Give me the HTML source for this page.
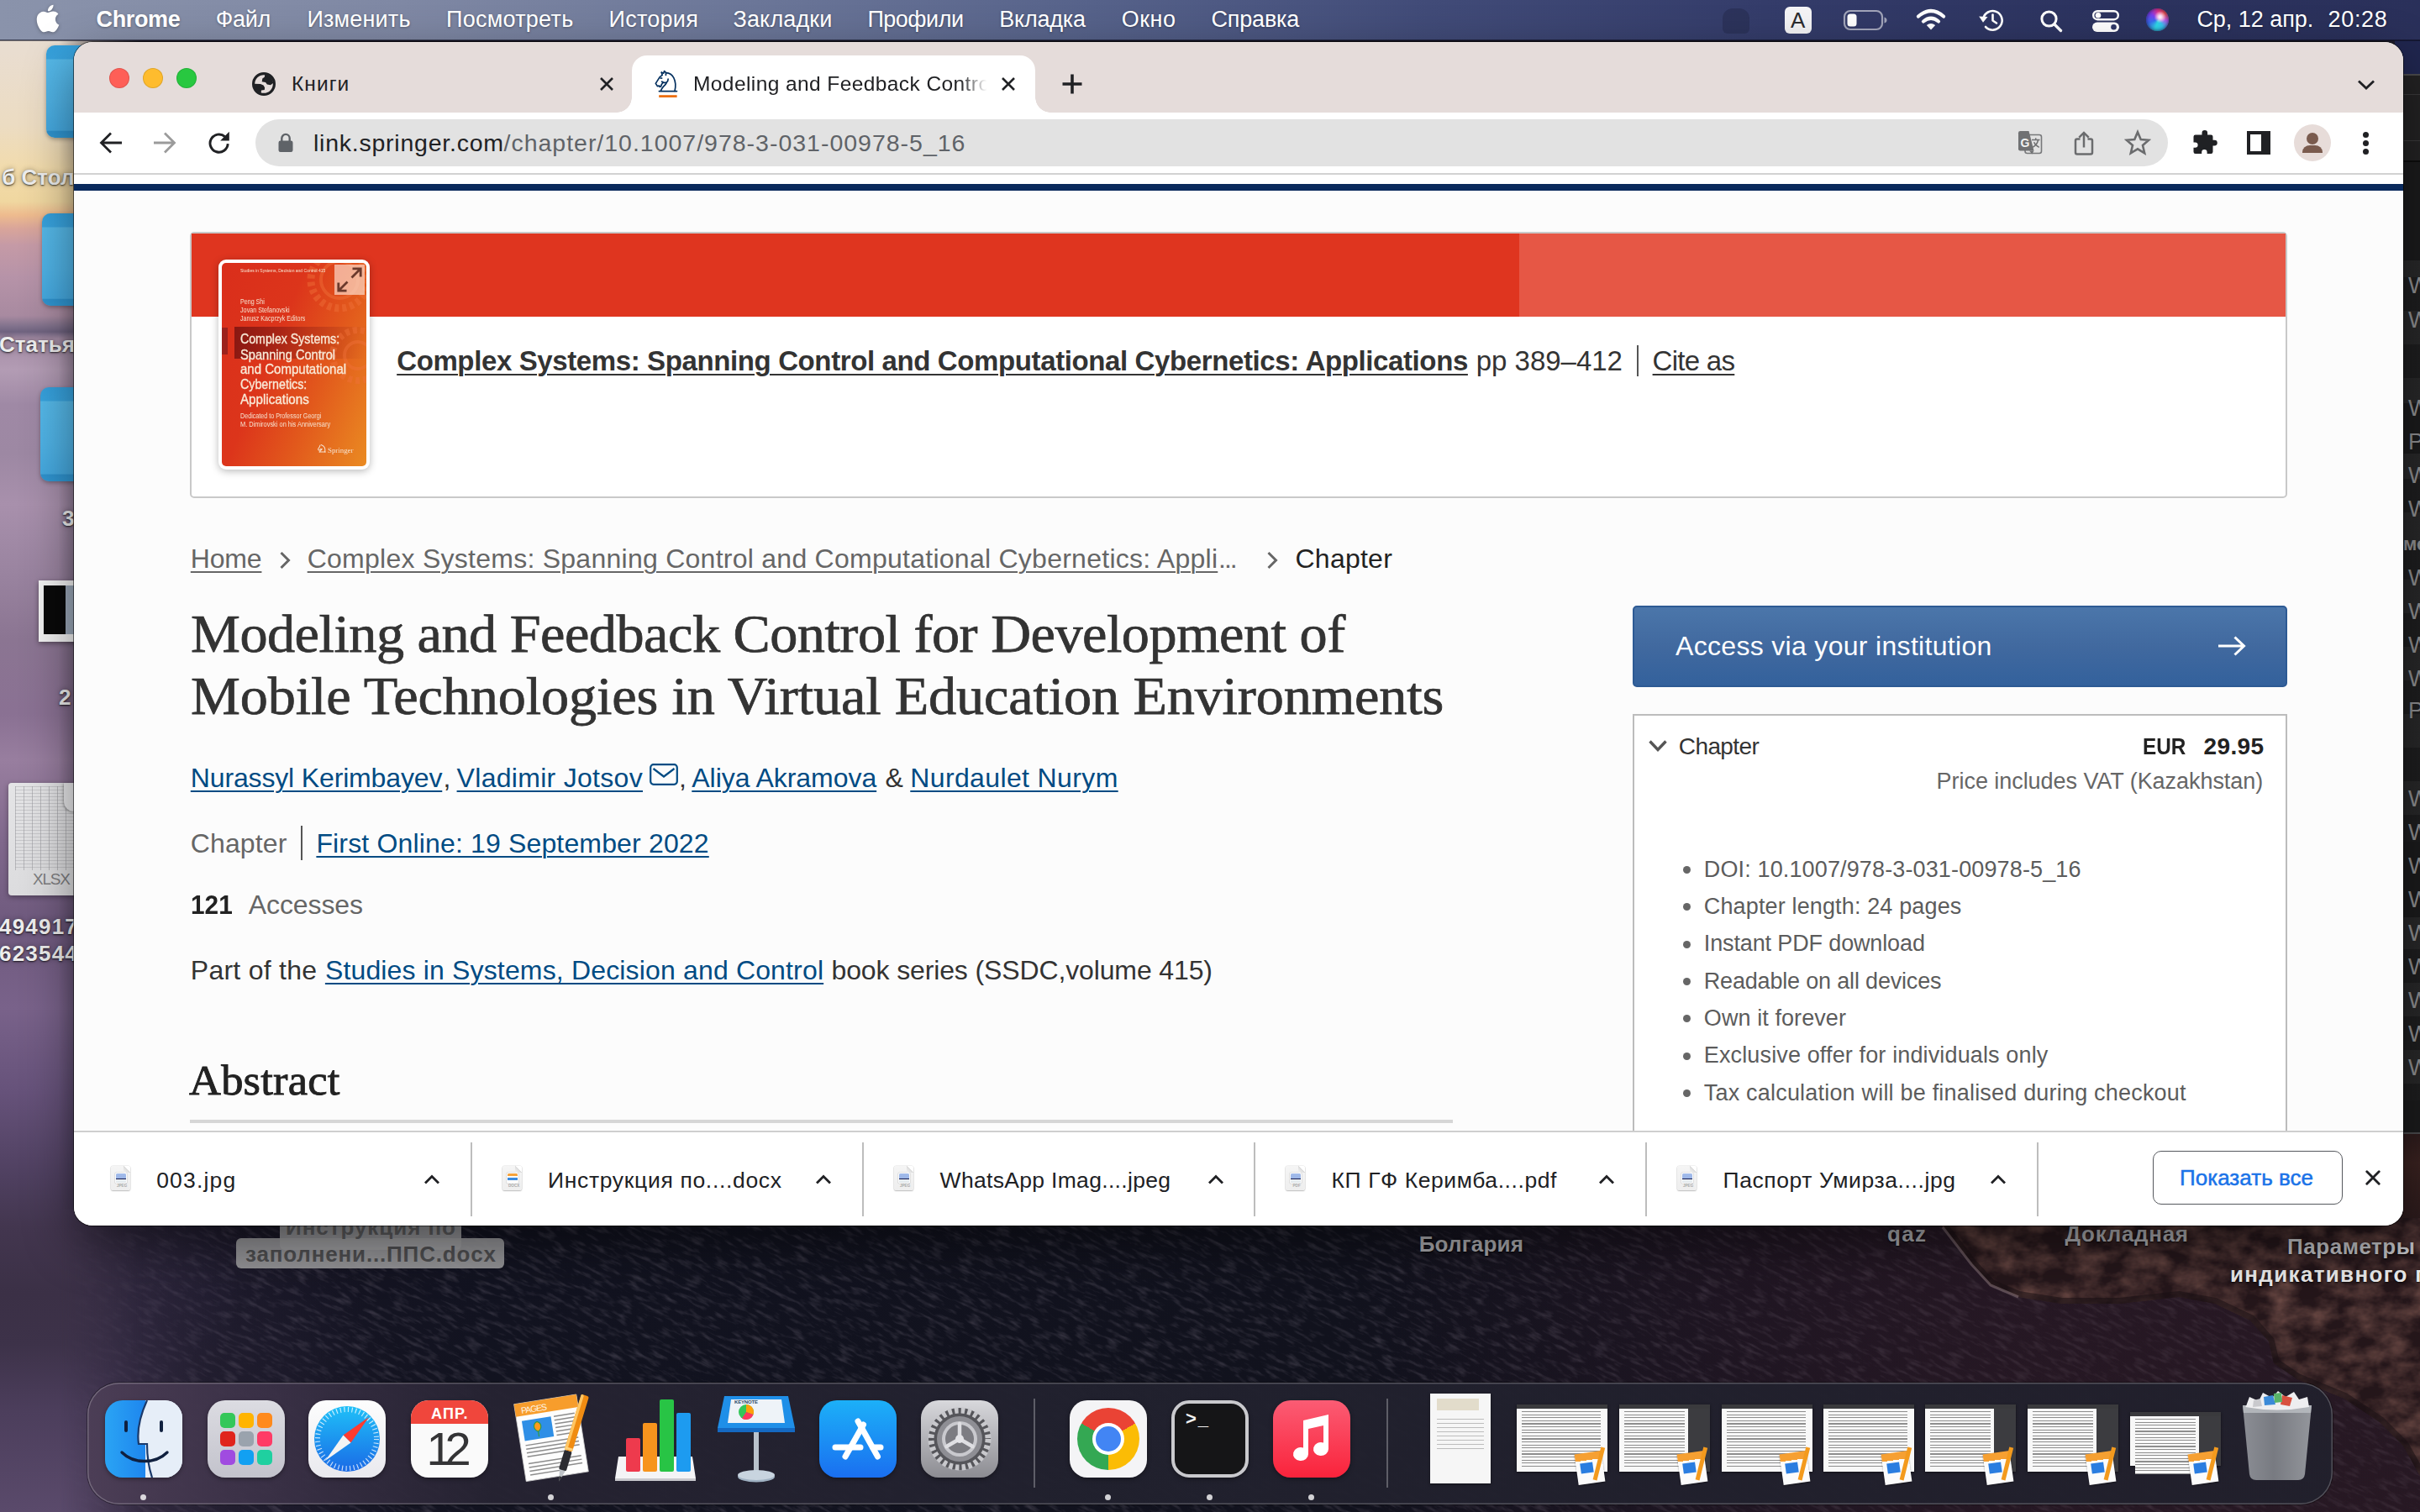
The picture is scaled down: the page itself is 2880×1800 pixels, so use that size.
<!DOCTYPE html>
<html lang="ru"><head><meta charset="utf-8"><title>Modeling and Feedback Control</title>
<style>
*{box-sizing:border-box;margin:0;padding:0}
html,body{width:2880px;height:1800px;overflow:hidden;background:#1e1c2a}
body{font-family:"Liberation Sans",sans-serif;-webkit-font-smoothing:antialiased}
#root{position:relative;width:2880px;height:1800px;overflow:hidden}
.abs,.t,#root svg.i{position:absolute}
.t{white-space:nowrap;display:block}
.u{text-decoration:underline;text-decoration-thickness:2px;text-underline-offset:4px}
/* wallpaper */
#wp{position:absolute;left:0;top:0;width:2880px;height:1800px;background:#1f1d2b}
/* menubar */
#menubar{position:absolute;left:0;top:0;width:2880px;height:48px;background:linear-gradient(90deg,#8a93ab 0,#7f88a4 480px,#6b7698 900px,#56628a 1300px,#414b78 1700px,#343c6a 2100px,#2c335f 2500px,#2a305a 2880px)}
.mb{color:#fff;text-shadow:0 1px 3px rgba(0,0,0,.35)}
/* window */
#win{position:absolute;left:88px;top:50px;width:2772px;height:1409px;border-radius:22px;background:#fcfcfc;overflow:hidden;box-shadow:0 0 0 1px rgba(0,0,0,.55),0 22px 60px rgba(0,0,0,.45)}
#wing{position:absolute;left:-88px;top:-50px;width:2880px;height:1800px}
#wing div,#wing svg{position:absolute}
#tabstrip{left:88px;top:50px;width:2772px;height:84px;background:#e5dcda}
#toolbar{left:88px;top:134px;width:2772px;height:73px;background:#fff}
#tbline{left:88px;top:206px;width:2772px;height:2px;background:#d2d2d2}
#pagetop{left:88px;top:208px;width:2772px;height:11px;background:#fff}
#navy{left:88px;top:219px;width:2772px;height:8px;background:#0a2a5c}
#omni{left:304px;top:142px;width:2276px;height:56px;border-radius:28px;background:#e2e2e2}
#tab2{left:752px;top:66px;width:480px;height:68px;background:#fff;border-radius:18px 18px 0 0}
#tab2:before,#tab2:after{content:"";position:absolute;bottom:0;width:18px;height:18px;background:radial-gradient(circle at 0 0,rgba(255,255,255,0) 17.5px,#fff 18px)}
#tab2:before{left:-18px}
#tab2:after{right:-18px;transform:scaleX(-1)}
/* downloads bar */
#dlbar{left:88px;top:1346px;width:2772px;height:113px;background:#fff;border-top:2px solid #cfcfcf}
.dlsep{top:1360px;width:2px;height:88px;background:#bdbdbd}
/* page */
#card{left:226px;top:276px;width:2496px;height:317px;border:2px solid #c9c9c9;border-radius:5px;background:#fff;overflow:hidden}
#red1{left:228px;top:278px;width:1580px;height:99px;background:#df351f}
#red2{left:1808px;top:278px;width:912px;height:99px;background:#e65745}
#cover{left:260px;top:309px;width:180px;height:250px;border-radius:9px;background:#fff;box-shadow:0 2px 10px rgba(0,0,0,.28)}
#coverimg{left:264px;top:313px;width:172px;height:242px;border-radius:5px;overflow:hidden;background:linear-gradient(112deg,#da2e1b 0,#dc351b 38%,#e25a1c 66%,#ea8b22 100%)}
#btn{left:1943px;top:721px;width:779px;height:97px;border-radius:5px;border:2px solid #2d5a94;background:linear-gradient(180deg,#4b76aa 0,#41699f 50%,#33619c 100%)}
#buybox{left:1943px;top:850px;width:779px;height:520px;border:2px solid #bcbcbc;background:#fff}
#absrule{left:226px;top:1333px;width:1503px;height:4px;background:#d6d6d6}
.vsep{width:2px;background:#555}
.fold{border-radius:10px;background:linear-gradient(180deg,#35a0dc 0,#38a3de 16px,#55b8e8 17px,#4fb2e5 60%,#45a9e0 92%,#2f93cf 93%,#3097d2 100%);box-shadow:0 2px 5px rgba(0,0,0,.3)}
.dl{color:#ececec;text-shadow:0 1px 2px rgba(0,0,0,.75),0 0 6px rgba(0,0,0,.35)}
.bul{left:2003px;width:9px;height:9px;border-radius:50%;background:#666}
.car{top:1397px}
.fic{top:1388px;width:23px;height:29px;border-radius:2.500px;background:linear-gradient(180deg,#f5f5f5,#eeeeee);box-shadow:0 0 0 .6px rgba(0,0,0,.10),0 1px 1.500px rgba(0,0,0,.22)}
.fic:before{content:"";position:absolute;left:6px;top:8.500px;width:11.500px;height:11.500px;border-radius:1.500px;background:linear-gradient(180deg,#a3bceb 0,#9ab4e6 52%,#10164f 53%,#1a1f4a 64%,#eef3f6 65%,#dfe6ea 100%);box-shadow:0 0 0 1.200px rgba(255,255,255,.9),0 0 0 1.800px rgba(0,0,0,.12)}
.fic:after{content:"";position:absolute;right:0;top:0;width:8px;height:8px;background:linear-gradient(225deg,#fff 0,#fff 48%,#dcdcdc 50%,#f6f6f6 100%);border-radius:0 2px 0 2px}
.fic.dx:before{background:linear-gradient(180deg,#f7a23a 0,#f7a23a 30%,#fbfbfb 31%,#fbfbfb 45%,#3b8be0 46%,#3b8be0 75%,#fbfbfb 76%)}
/* dock */
#dock{position:absolute;left:104px;top:1646px;width:2672px;height:145px;border-radius:38px;background:linear-gradient(90deg,rgba(76,62,86,.94) 0,rgba(60,50,72,.94) 200px,rgba(38,35,50,.95) 480px,rgba(33,33,46,.96) 1200px,rgba(33,32,44,.96) 100%);box-shadow:inset 0 0 0 1.500px rgba(255,255,255,.22),0 0 0 1px rgba(0,0,0,.35)}
#dockin .abs{position:absolute}
.di{position:absolute;top:1667px;width:92px;height:92px;border-radius:21px;overflow:hidden;box-shadow:0 2px 5px rgba(0,0,0,.35)}
.th{position:absolute;top:1672px;width:108px;height:80px;background:#f8f8f8;border-top:5px solid #3a3a3d;box-shadow:0 1px 3px rgba(0,0,0,.5)}
.th i{position:absolute;left:6px;top:3px;width:94px;height:66px;background:repeating-linear-gradient(180deg,#8e8e8e 0 1.200px,#f8f8f8 1.200px 3.600px)}
.th.dk:after{content:"";position:absolute;right:0;top:0;width:26px;height:100%;background:#3c3c40}
.th.dk i{width:72px}
.pb{position:absolute;top:1729px;width:32px;height:37px;background:linear-gradient(180deg,#f6a032 0 9px,#fbfbfb 9px 100%);transform:rotate(-8deg);box-shadow:0 1px 2px rgba(0,0,0,.4)}
.pb:before{content:"";position:absolute;left:5px;top:12px;width:15px;height:12px;background:#2a7de0}
.pb:after{content:"";position:absolute;left:25px;top:-5px;width:4.500px;height:40px;background:#f39a1d;transform:rotate(22deg)}
.dot{position:absolute;top:1779px;width:7px;height:7px;border-radius:50%;background:rgba(255,255,255,.8)}
.h1{-webkit-text-stroke:.75px #333}
.h2{-webkit-text-stroke:.85px #222}

</style></head>
<body>
<div id="root">
<div id="wp"></div>
<!-- sun glow -->
<div class="abs" style="left:-120px;top:150px;width:330px;height:170px;background:radial-gradient(ellipse at 30% 50%,rgba(248,212,140,.7),rgba(248,212,140,0) 70%)"></div>
<!-- bottom ocean -->
<svg class="i" style="left:0;top:1440px" width="2880" height="360" viewBox="0 1440 2880 360">
<defs>
<linearGradient id="oc" x1="0" y1="0" x2="1" y2="0"><stop offset="0" stop-color="#1c1828"/><stop offset=".2" stop-color="#121320"/><stop offset=".55" stop-color="#11121d"/><stop offset=".72" stop-color="#181320"/><stop offset="1" stop-color="#1b141f"/></linearGradient>
<radialGradient id="mist" cx="-40" cy="1780" r="760" gradientUnits="userSpaceOnUse"><stop offset="0" stop-color="#5c4b6a"/><stop offset=".2" stop-color="#4a3c58" stop-opacity=".75"/><stop offset=".42" stop-color="#3a3048" stop-opacity=".28"/><stop offset=".7" stop-color="#3a3050" stop-opacity="0"/></radialGradient>
<radialGradient id="mist2" cx="0" cy="1470" r="300" gradientUnits="userSpaceOnUse"><stop offset="0" stop-color="#46394f" stop-opacity=".9"/><stop offset="1" stop-color="#3a3050" stop-opacity="0"/></radialGradient>
<linearGradient id="cl" x1="0" y1="0" x2="1" y2="1"><stop offset="0" stop-color="#3c2424"/><stop offset=".5" stop-color="#432826"/><stop offset="1" stop-color="#2a1a1e"/></linearGradient>
<filter id="rip" x="0" y="0" width="100%" height="100%"><feTurbulence type="fractalNoise" baseFrequency="0.05 0.2" numOctaves="3" seed="7" result="n"/><feColorMatrix in="n" type="matrix" values="0 0 0 0 0.30  0 0 0 0 0.26  0 0 0 0 0.33  0 0 0 2.6 -1.25"/></filter>
</defs>
<rect x="0" y="1440" width="2880" height="360" fill="url(#oc)"/>
<g transform="rotate(27 1440 1620)"><rect x="-200" y="600" width="3300" height="2100" filter="url(#rip)" opacity=".24"/></g>
<rect x="0" y="1440" width="900" height="360" fill="url(#mist)"/>
<rect x="0" y="1440" width="500" height="360" fill="url(#mist2)"/>
<!-- reddish sheen near shore -->
<linearGradient id="sheen" x1="1650" y1="0" x2="2400" y2="0" gradientUnits="userSpaceOnUse"><stop offset="0" stop-color="#3a1f2a" stop-opacity="0"/><stop offset="1" stop-color="#3a1f2a" stop-opacity=".38"/></linearGradient>
<rect x="1650" y="1440" width="1230" height="360" fill="url(#sheen)"/>
<!-- cliffs -->
<clipPath id="clp"><path d="M2300 1440 L2312 1461 L2346 1505 L2369 1530 L2402 1544 L2453 1552 L2523 1552 L2593 1544 L2636 1552 L2678 1572 L2700 1597 L2706 1623 L2734 1642 L2790 1665 L2832 1693 L2860 1721 L2880 1757 L2880 1440Z"/></clipPath>
<filter id="rock" x="0" y="0" width="100%" height="100%"><feTurbulence type="fractalNoise" baseFrequency="0.03 0.045" numOctaves="4" seed="11" result="n"/><feColorMatrix in="n" type="matrix" values="0 0 0 0 0.47  0 0 0 0 0.22  0 0 0 0 0.17  0 0 0 1.7 -0.55"/></filter>
<g clip-path="url(#clp)"><rect x="2290" y="1440" width="600" height="330" fill="#24161a"/><rect x="2290" y="1440" width="600" height="330" filter="url(#rock)" opacity=".5"/><path d="M2312 1461 L2346 1505 L2369 1530 L2402 1544 L2453 1552 L2523 1552 L2593 1544 L2636 1552 L2678 1572 L2700 1597 L2706 1623 L2734 1642 L2790 1665 L2832 1693 L2860 1721 L2880 1757" fill="none" stroke="#1a1014" stroke-width="14" opacity=".55"/></g>
<path d="M2312 1461 L2346 1505 L2369 1530 L2402 1544" fill="none" stroke="#8a767c" stroke-width="3" opacity=".55"/>
</svg>
<!-- left sky strip -->
<div class="abs" style="left:0;top:0;width:170px;height:1800px;background:linear-gradient(180deg,#e8ded4 0,#e9ddd0 60px,#ecdcc2 150px,#f2dbaa 205px,#f0d7a0 240px,#eebb8e 256px,#d9a59a 272px,#c59aa6 292px,#b693a8 330px,#a88aa0 376px,#85758f 387px,#6f6380 395px,#a48ca5 403px,#b39cb4 440px,#9f89a5 482px,#9d88a3 540px,#a890ac 600px,#9a84a0 680px,#8b7592 760px,#8a7193 850px,#987e9f 905px,#80688c 1000px,#6f5a7e 1100px,#79628a 1200px,#66527a 1300px,#4f4060 1400px,#43364f 1460px,#3b3046 1540px,#3d3249 1600px,#4c3e5c 1680px,#5a4a6b 1800px);-webkit-mask-image:linear-gradient(90deg,#000 0,#000 70px,rgba(0,0,0,.55) 110px,rgba(0,0,0,0) 170px);mask-image:linear-gradient(90deg,#000 0,#000 70px,rgba(0,0,0,.55) 110px,rgba(0,0,0,0) 170px)"></div>
<!-- right background window (dark app) -->
<div class="abs" style="left:2850px;top:48px;width:30px;height:42px;background:#20264f"></div>
<div class="abs" style="left:2850px;top:1340px;width:30px;height:110px;background:linear-gradient(180deg,#2a1a1b,#3a2220 40%,#2c1b1c)"></div>
<div class="abs" style="left:2850px;top:88px;width:30px;height:1262px;background:#1c1c1d;border-top:2px solid #4a4a4c;border-bottom:2px solid #4a4a4c"></div>
</file_text>

<!-- desktop folders (left, mostly hidden behind window) -->
<div class="abs fold" style="left:55px;top:54px;width:120px;height:110px"></div>
<div class="abs fold" style="left:50px;top:254px;width:120px;height:110px"></div>
<div class="abs fold" style="left:48px;top:461px;width:120px;height:112px"></div>
<!-- screenshot thumbnail -->
<div class="abs" style="left:46px;top:691px;width:120px;height:73px;background:#f2f2f2;box-shadow:0 2px 6px rgba(0,0,0,.4)"><div class="abs" style="left:6px;top:6px;width:26px;height:58px;background:#0a0a0a"></div><div class="abs" style="left:32px;top:6px;width:60px;height:58px;background:#9aa7b8"></div></div>
<!-- xlsx file -->
<div class="abs" style="left:10px;top:932px;width:110px;height:134px;border-radius:4px;background:linear-gradient(180deg,#e4e4e6,#dcdcde);box-shadow:0 2px 6px rgba(0,0,0,.35)">
<div class="abs" style="left:8px;top:4px;width:100px;height:100px;background:repeating-linear-gradient(90deg,rgba(150,150,155,.55) 0 1px,rgba(0,0,0,0) 1px 10px),repeating-linear-gradient(180deg,rgba(150,150,155,.35) 0 1px,rgba(0,0,0,0) 1px 4px)"></div>
<div class="abs" style="left:66px;top:0;width:44px;height:34px;background:#e9e9eb;border-radius:0 0 0 12px;box-shadow:-1px 1px 3px rgba(0,0,0,.3)"></div>
</div>
<!-- rows of the dark window at right edge -->
<div class="abs" style="left:2860px;top:90px;width:20px;height:1258px;background:repeating-linear-gradient(180deg,#1e1e1f 0 40px,#29292a 40px 80px);opacity:.9"></div>
<div class="abs" style="left:2860px;top:90px;width:20px;height:220px;background:#1b1b1c"></div>
<div class="abs" style="left:2860px;top:480px;width:20px;height:60px;background:#1b1b1c"></div>
<div class="abs" style="left:2860px;top:1002px;width:20px;height:90px;background:#1b1b1c"></div>
<div class="abs" style="left:2860px;top:1310px;width:20px;height:38px;background:#1b1b1c"></div>
<div class="abs" style="left:2860px;top:112px;width:20px;height:1px;background:#3a3a3b"></div><div class="abs" style="left:2860px;top:167px;width:20px;height:1px;background:#3a3a3b"></div><div class="abs" style="left:2860px;top:191px;width:20px;height:2px;background:#0c0c0c"></div><div class="abs" style="left:2860px;top:90px;width:20px;height:101px;background:rgba(60,55,56,.25)"></div>
<!-- highlighted desktop label box -->
<div class="abs" style="left:333px;top:1452px;width:216px;height:36px;background:rgba(156,156,158,.9);border-radius:6px"></div>
<div class="abs" style="left:281px;top:1474px;width:319px;height:36px;background:rgba(156,156,158,.92);border-radius:6px"></div>
</file_text>

<div id="desktexts">
<span class="t dl" style="left:2.3px;top:198.3px;font-size:26px;line-height:26px;color:#ededed;font-weight:700;">б Стол</span>
<span class="t dl" style="left:-1.0px;top:397.4px;font-size:26px;line-height:26px;color:#ededed;font-weight:700;">Статья</span>
<span class="t dl" style="left:74.0px;top:604.4px;font-size:26px;line-height:26px;color:#ededed;font-weight:700;">3</span>
<span class="t dl" style="left:70.0px;top:817.4px;font-size:26px;line-height:26px;color:#ededed;font-weight:700;">2</span>
<span class="t dl" style="left:-1.0px;top:1089.8px;font-size:26px;line-height:26px;color:#ededed;font-weight:700;letter-spacing:1.2px;">4949175</span>
<span class="t dl" style="left:-1.0px;top:1122.4px;font-size:26px;line-height:26px;color:#ededed;font-weight:700;letter-spacing:1.2px;">623544</span>
<span class="t" style="left:39.0px;top:1036.9px;font-size:19px;line-height:19px;color:#7d7d80;letter-spacing:-1.195px;">XLSX</span>
<span class="t" style="left:340.0px;top:1448.0px;font-size:26px;line-height:26px;color:#5a5a5c;font-weight:700;letter-spacing:0.955px;">Инструкция по</span>
<span class="t" style="left:292.0px;top:1480.0px;font-size:26px;line-height:26px;color:#4e4e50;font-weight:700;letter-spacing:0.838px;">заполнени...ППС.docx</span>
<span class="t dl" style="left:1688.7px;top:1468.0px;font-size:26px;line-height:26px;color:#a9a9ad;font-weight:700;letter-spacing:0.219px;">Болгария</span>
<span class="t dl" style="left:2246.0px;top:1456.0px;font-size:26px;line-height:26px;color:#a9a9ad;font-weight:700;letter-spacing:1.329px;">qaz</span>
<span class="t dl" style="left:2457.5px;top:1456.0px;font-size:26px;line-height:26px;color:#a9a9ad;font-weight:700;letter-spacing:0.704px;">Докладная</span>
<span class="t dl" style="left:2722.0px;top:1471.0px;font-size:26px;line-height:26px;color:#bdbdc0;font-weight:700;letter-spacing:0.543px;">Параметры</span>
<span class="t dl" style="left:2654.0px;top:1504.0px;font-size:26px;line-height:26px;color:#e9e9e9;font-weight:700;letter-spacing:1.341px;">индикативного п</span>
<span class="t" style="left:2866.0px;top:327.1px;font-size:27px;line-height:27px;color:#8f8f91;">W</span>
<span class="t" style="left:2866.0px;top:368.1px;font-size:27px;line-height:27px;color:#8f8f91;">W</span>
<span class="t" style="left:2866.0px;top:473.1px;font-size:27px;line-height:27px;color:#8f8f91;">W</span>
<span class="t" style="left:2866.0px;top:553.1px;font-size:27px;line-height:27px;color:#8f8f91;">W</span>
<span class="t" style="left:2866.0px;top:593.1px;font-size:27px;line-height:27px;color:#8f8f91;">W</span>
<span class="t" style="left:2866.0px;top:675.1px;font-size:27px;line-height:27px;color:#8f8f91;">W</span>
<span class="t" style="left:2866.0px;top:715.1px;font-size:27px;line-height:27px;color:#8f8f91;">W</span>
<span class="t" style="left:2866.0px;top:755.1px;font-size:27px;line-height:27px;color:#8f8f91;">W</span>
<span class="t" style="left:2866.0px;top:795.1px;font-size:27px;line-height:27px;color:#8f8f91;">W</span>
<span class="t" style="left:2866.0px;top:938.1px;font-size:27px;line-height:27px;color:#8f8f91;">W</span>
<span class="t" style="left:2866.0px;top:978.1px;font-size:27px;line-height:27px;color:#8f8f91;">W</span>
<span class="t" style="left:2866.0px;top:1018.1px;font-size:27px;line-height:27px;color:#8f8f91;">W</span>
<span class="t" style="left:2866.0px;top:1058.1px;font-size:27px;line-height:27px;color:#8f8f91;">W</span>
<span class="t" style="left:2866.0px;top:1098.1px;font-size:27px;line-height:27px;color:#8f8f91;">W</span>
<span class="t" style="left:2866.0px;top:1138.1px;font-size:27px;line-height:27px;color:#8f8f91;">W</span>
<span class="t" style="left:2866.0px;top:1178.1px;font-size:27px;line-height:27px;color:#8f8f91;">W</span>
<span class="t" style="left:2866.0px;top:1218.1px;font-size:27px;line-height:27px;color:#8f8f91;">W</span>
<span class="t" style="left:2866.0px;top:1258.1px;font-size:27px;line-height:27px;color:#8f8f91;">W</span>
<span class="t" style="left:2866.0px;top:513.1px;font-size:27px;line-height:27px;color:#8f8f91;">P</span>
<span class="t" style="left:2866.0px;top:833.1px;font-size:27px;line-height:27px;color:#8f8f91;">P</span>
<span class="t" style="left:2860.0px;top:637.4px;font-size:22px;line-height:22px;color:#8f8f91;font-weight:700;">мс</span>
</div>
<div id="menubar"></div>
<div class="abs" style="left:0;top:47px;width:2880px;height:2px;background:rgba(10,10,25,.55)"></div>
<!-- apple logo -->
<svg class="i" style="left:42px;top:5px;filter:drop-shadow(0 1px 2px rgba(0,0,0,.3))" width="30" height="34" viewBox="1 -0.5 22 25"><path fill="#fff" d="M12.152 6.896c-.948 0-2.415-1.078-3.96-1.04-2.04.027-3.91 1.183-4.961 3.014-2.117 3.675-.546 9.103 1.519 12.09 1.013 1.454 2.208 3.09 3.792 3.039 1.52-.065 2.09-.987 3.935-.987 1.831 0 2.35.987 3.96.948 1.637-.026 2.676-1.48 3.676-2.948 1.156-1.688 1.636-3.325 1.662-3.415-.039-.013-3.182-1.221-3.22-4.857-.026-3.04 2.48-4.494 2.597-4.559-1.429-2.09-3.623-2.324-4.39-2.376-2-.156-3.675 1.09-4.61 1.09zM15.53 3.83c.843-1.012 1.4-2.427 1.245-3.83-1.207.052-2.662.805-3.532 1.818-.78.896-1.454 2.338-1.273 3.714 1.338.104 2.715-.688 3.559-1.701"/></svg>
<!-- faint hidden status icon -->
<div class="abs" style="left:2050px;top:10px;width:32px;height:30px;border-radius:12px 12px 6px 6px;background:rgba(20,24,50,.28)"></div>
<!-- input source A -->
<div class="abs" style="left:2124px;top:8px;width:32px;height:32px;border-radius:6px;background:#f4f4f6"></div>
<!-- battery -->
<svg class="i" style="left:2192px;top:10px" width="56" height="28" viewBox="0 0 56 28"><rect x="3" y="3" width="45" height="22" rx="7" fill="none" stroke="#fff" stroke-opacity=".55" stroke-width="2.2"/><rect x="6.5" y="6.500" width="11" height="15" rx="3.500" fill="#fff"/><path d="M50.500 10.500 q3 1 3 3.500 q0 2.500 -3 3.500z" fill="#fff" fill-opacity=".55"/></svg>
<!-- wifi -->
<svg class="i" style="left:2280px;top:10px" width="36" height="27" viewBox="0 0 36 27"><g fill="none" stroke="#fff" stroke-linecap="round"><path d="M3 9.500 Q18 -3.500 33 9.500" stroke-width="4.200"/><path d="M9 15.500 Q18 8 27 15.500" stroke-width="4.200"/></g><path d="M18 25.500 L12.800 20 Q18 15.800 23.200 20Z" fill="#fff"/></svg>
<!-- time machine -->
<svg class="i" style="left:2354px;top:9px" width="32" height="30" viewBox="0 0 32 30"><g fill="none" stroke="#fff" stroke-width="2.600" stroke-linecap="round" stroke-linejoin="round"><path d="M6.200 13.500 A11.300 11.300 0 1 1 9 23"/><path d="M17.500 8.500 V15.500 L22 18.500"/></g><path d="M1.200 10.500 L11.500 11 L6 17.800Z" fill="#fff"/></svg>
<!-- spotlight -->
<svg class="i" style="left:2427px;top:11px" width="28" height="28" viewBox="0 0 28 28"><circle cx="11.500" cy="11.500" r="8.600" fill="none" stroke="#fff" stroke-width="3"/><path d="M18 18 L25.500 25.500" stroke="#fff" stroke-width="3.400" stroke-linecap="round"/></svg>
<!-- control center -->
<svg class="i" style="left:2490px;top:12px" width="32" height="26" viewBox="0 0 32 26"><rect x="1.200" y="1.200" width="29.600" height="10" rx="5" fill="none" stroke="#fff" stroke-width="2.400"/><circle cx="7" cy="6.200" r="3.300" fill="#fff"/><rect x="0" y="14.500" width="32" height="11.500" rx="5.750" fill="#fff"/><circle cx="25.500" cy="20.250" r="3.300" fill="#2f3868"/></svg>
<!-- siri -->
<div class="abs" style="left:2554px;top:10px;width:27px;height:27px;border-radius:50%;background:radial-gradient(circle at 62% 38%,#fff 0,#f6d8f4 9%,rgba(255,255,255,0) 30%),conic-gradient(from 200deg at 55% 48%,#2fd9e6,#3a6cf0,#7b3ff2,#e8368f,#ff5a4a,#b85cf0,#35c8f0,#2fd9e6);box-shadow:inset 0 0 5px rgba(20,10,60,.8)"></div>
</file_text>

<div id="win"><div id="wing">
<div id="tabstrip"></div>
<!-- traffic lights -->
<div style="left:130px;top:81px;width:24px;height:24px;border-radius:50%;background:#fe5f57;box-shadow:inset 0 0 0 1px rgba(0,0,0,.12)"></div>
<div style="left:170px;top:81px;width:24px;height:24px;border-radius:50%;background:#febc2e;box-shadow:inset 0 0 0 1px rgba(0,0,0,.12)"></div>
<div style="left:210px;top:81px;width:24px;height:24px;border-radius:50%;background:#28c840;box-shadow:inset 0 0 0 1px rgba(0,0,0,.12)"></div>
<!-- tab1 globe favicon -->
<svg style="left:300px;top:86px" width="28" height="28" viewBox="0 0 28 28"><circle cx="14" cy="14" r="12.400" fill="#e5dcda" stroke="#202124" stroke-width="3.200"/><path fill="#202124" d="M15.400 2.500 L14.800 5.700 L12.300 7.600 L11.700 11.300 L16 11.900 L17.900 14.400 L22 15.200 L25.300 12.800 A12 12 0 0 0 15.400 2.500Z M2.200 13.800 L10 13.900 L13.500 15.500 L15.100 18.200 L14.800 21 L11 21.600 L10.600 25 A12 12 0 0 1 2.200 13.800Z"/></svg>
<!-- tab1 close -->
<svg style="left:713px;top:91px" width="18" height="18" viewBox="0 0 18 18"><path d="M2 2 L16 16 M16 2 L2 16" stroke="#202124" stroke-width="2.600" fill="none"/></svg>
<!-- active tab -->
<div id="tab2"></div>
<!-- springer favicon -->
<svg style="left:779px;top:83px" width="28" height="34" viewBox="0 0 28 34"><g fill="none" stroke="#04305f" stroke-width="1.700" stroke-linecap="round" stroke-linejoin="round"><path d="M5.400 25.600 H26.500"/><path d="M8.300 3.200 L9.200 6.400 L6.200 8.600 L1.300 16.400 L3.400 19.600 L5.600 19 L6 20.300 L7.500 20 C8 18 8.600 16.600 9.900 15.400 L14.100 15.400 C15.400 14.400 16.100 12.800 16.100 11.200"/><path d="M8.300 3.200 L10.600 4.200 L11.600 1.600 L13.600 3.600 L13.400 6.400"/><path d="M13.600 3.600 C17 3.800 20.700 5.600 22.800 9.600 C24.600 13.200 25.600 19 24 25.400"/><path d="M14.100 15.600 C13.200 17.800 11.600 19 10.300 20.400 C8.800 22 7.800 23.400 7.400 25.200"/><path d="M7.200 10.200 L8.600 10"/><path d="M8.600 14.200 L10 14.600"/></g><rect x="5.200" y="30.200" width="21.400" height="2.800" fill="#ec6f12"/></svg>
<!-- tab2 close -->
<svg style="left:1191px;top:91px" width="18" height="18" viewBox="0 0 18 18"><path d="M2 2 L16 16 M16 2 L2 16" stroke="#202124" stroke-width="2.600" fill="none"/></svg>
<!-- new tab plus -->
<svg style="left:1264px;top:88px" width="24" height="24" viewBox="0 0 24 24"><path d="M12 0.500 V23.500 M0.500 12 H23.500" stroke="#202124" stroke-width="3.600" fill="none"/></svg>
<!-- tab search chevron -->
<svg style="left:2805px;top:94px" width="22" height="14" viewBox="0 0 22 14"><path d="M2 2.500 L11 11 L20 2.500" stroke="#202124" stroke-width="2.800" fill="none"/></svg>

<div id="toolbar"></div>
<div id="tbline"></div>
<div id="pagetop"></div>
<div id="navy"></div>
<div id="omni"></div>
<!-- back -->
<svg style="left:117px;top:155px" width="30" height="30" viewBox="0 0 30 30"><path d="M28 15 H4 M15 3.500 L3.500 15 L15 26.500" stroke="#202124" stroke-width="2.800" fill="none" stroke-linejoin="miter"/></svg>
<!-- forward -->
<svg style="left:181px;top:155px" width="30" height="30" viewBox="0 0 30 30"><path d="M2 15 H26 M15 3.500 L26.500 15 L15 26.500" stroke="#9b9b9b" stroke-width="2.800" fill="none"/></svg>
<!-- reload -->
<svg style="left:245px;top:154px" width="32" height="32" viewBox="0 0 32 32"><path d="M26.200 17.200 A10.600 10.600 0 1 1 22.600 8.600" stroke="#202124" stroke-width="2.900" fill="none"/><path d="M17.200 13.400 H27.800 V2.800Z" fill="#202124"/></svg>
<!-- lock -->
<svg style="left:331px;top:158px" width="18" height="24" viewBox="0 0 18 24"><rect x="0.500" y="9.500" width="17" height="13.500" rx="2.200" fill="#5f6368"/><path d="M4.300 10 V6.600 A4.700 4.700 0 0 1 13.700 6.600 V10" fill="none" stroke="#5f6368" stroke-width="2.400"/></svg>
<!-- translate -->
<svg style="left:2401px;top:155px" width="30" height="30" viewBox="0 0 30 30"><rect x="9" y="5.500" width="19.500" height="22" rx="2.500" fill="#e2e2e2" stroke="#77787a" stroke-width="1.600"/><path d="M1 3.200 Q1 1 3.200 1 H13.500 L19.500 24.500 H3.200 Q1 24.500 1 22.300Z" fill="#707173"/><path d="M14 24.500 L19.500 24.500 L17.400 28.500Z" fill="#707173"/><path d="M17 11.500 H26.500 M21.700 9.300 V11.500 M24.600 11.500 C23.800 15.500 21.400 18.600 18 20.400 M19.600 14.200 C20.800 17 22.800 19 25.800 20.400" fill="none" stroke="#707173" stroke-width="1.500"/></svg>
<!-- share -->
<svg style="left:2467px;top:155px" width="26" height="31" viewBox="0 0 26 31"><path d="M8.500 10.500 H5 Q3 10.500 3 12.500 V26.500 Q3 28.500 5 28.500 H21 Q23 28.500 23 26.500 V12.500 Q23 10.500 21 10.500 H17.500" fill="none" stroke="#6b6c6e" stroke-width="2.500"/><path d="M13 20.500 V3.500 M7.300 8.600 L13 2.900 L18.700 8.600" fill="none" stroke="#6b6c6e" stroke-width="2.500"/></svg>
<!-- star -->
<svg style="left:2528px;top:154px" width="32" height="31" viewBox="0 0 32 31"><path d="M16 3.200 L19.700 12 L29.200 12.800 L22 19 L24.200 28.300 L16 23.300 L7.800 28.300 L10 19 L2.800 12.800 L12.300 12Z" fill="none" stroke="#6b6c6e" stroke-width="2.600" stroke-linejoin="miter"/></svg>
<!-- extensions puzzle -->
<svg style="left:2609px;top:154px" width="31" height="30" viewBox="0 0 31 30"><path fill="#202124" d="M11.500 4.300 a3.300 3.300 0 0 1 6.600 0 V6.500 H22.300 Q24.500 6.500 24.500 8.700 V12.700 H26.400 a3.400 3.400 0 0 1 0 6.800 H24.500 V26.800 Q24.500 29 22.300 29 H17.600 V27.200 a3.200 3.200 0 0 0 -6.400 0 V29 H3.700 Q1.500 29 1.500 26.800 V21.800 H3.400 a3.200 3.200 0 0 0 0 -6.400 H1.500 V8.700 Q1.500 6.500 3.700 6.500 H11.500Z"/></svg>
<!-- side panel -->
<div style="left:2674px;top:156px;width:28px;height:28px;border:4px solid #202124;border-right-width:11px;background:#fff"></div>
<!-- avatar -->
<div style="left:2730px;top:148px;width:44px;height:44px;border-radius:50%;background:#e7dcd9;overflow:hidden"><div style="left:15px;top:10px;width:14px;height:14px;border-radius:50%;background:#7a5b4e"></div><div style="left:10px;top:25px;width:24px;height:9px;border-radius:9px 9px 0 0/8px 8px 0 0;background:#7a5b4e"></div></div>
<!-- kebab -->
<div style="left:2812px;top:157px;width:7px;height:7px;border-radius:50%;background:#202124"></div>
<div style="left:2812px;top:167px;width:7px;height:7px;border-radius:50%;background:#202124"></div>
<div style="left:2812px;top:177px;width:7px;height:7px;border-radius:50%;background:#202124"></div>

<!-- PAGE -->
<div id="card"></div>
<div id="red1"></div><div id="red2"></div>
<div id="cover"></div>
<div id="coverimg">
<div style="left:15px;top:76px;width:157px;height:38px;background:linear-gradient(100deg,rgba(105,14,14,.72),rgba(140,30,20,.38) 55%,rgba(150,40,20,0) 100%)"></div>
<div style="left:0;top:77px;width:7px;height:32px;background:#9c221c"></div>
<svg style="left:70px;top:-10px" width="110" height="200" viewBox="0 0 110 200"><g fill="none" stroke="#f0703a" stroke-opacity=".45"><circle cx="70" cy="30" r="34" stroke-width="9" stroke-dasharray="5 4"/><circle cx="70" cy="30" r="22" stroke-width="4"/><circle cx="92" cy="120" r="30" stroke-width="8" stroke-dasharray="5 4"/><circle cx="92" cy="120" r="16" stroke-width="4"/></g></svg>
<svg style="left:114px;top:216px" width="10" height="12" viewBox="0 0 28 34"><g fill="none" stroke="#f6e2cf" stroke-width="3" stroke-linecap="round" stroke-linejoin="round"><path d="M5.400 25.600 H26.500"/><path d="M8.300 3.200 L6.200 8.600 L1.300 16.400 L3.400 19.600 L7.500 20 C8 18 8.600 16.600 9.900 15.400 L14.100 15.400"/><path d="M11.600 1.600 C17 3.800 20.700 5.600 22.800 9.600 C24.600 13.200 25.600 19 24 25.400"/><path d="M14.100 15.600 C13.200 17.800 8.800 22 7.400 25.200"/></g></svg>
<div style="left:134px;top:2px;width:36px;height:36px;background:rgba(255,235,225,.62)"></div>
<svg style="left:134px;top:2px" width="36" height="36" viewBox="0 0 36 36"><g fill="none" stroke="#6b3a2c" stroke-width="2.800"><path d="M20.500 15.500 L31 5 M21.500 4.800 H31.200 V14.500"/><path d="M15.500 20.500 L5 31 M4.800 21.500 V31.200 H14.500"/></g></svg>
</div>
<div class="vsep" style="left:1948px;top:411px;height:37px"></div>
<!-- breadcrumb chevrons -->
<svg style="left:331px;top:655px" width="16" height="24" viewBox="0 0 16 24"><path d="M3.500 3 L12.500 12 L3.500 21" stroke="#666" stroke-width="3" fill="none"/></svg>
<svg style="left:1506px;top:655px" width="16" height="24" viewBox="0 0 16 24"><path d="M3.500 3 L12.500 12 L3.500 21" stroke="#666" stroke-width="3" fill="none"/></svg>
<!-- mail icon -->
<svg style="left:773px;top:909px" width="34" height="26" viewBox="0 0 34 26"><rect x="1.200" y="1.200" width="31.600" height="23.600" rx="3.500" fill="none" stroke="#004b83" stroke-width="2.200"/><path d="M4.500 6 L17 15.500 L29.500 6" fill="none" stroke="#004b83" stroke-width="2.200"/></svg>
<div class="vsep" style="left:358px;top:983px;height:41px"></div>
<div id="absrule"></div>
<!-- sidebar -->
<div id="btn"></div>
<svg style="left:2638px;top:755px" width="36" height="28" viewBox="0 0 36 28"><path d="M2 14 H32 M21.500 3.500 L32.500 14 L21.500 24.500" stroke="#fff" stroke-width="3" fill="none"/></svg>
<div id="buybox"></div>
<svg style="left:1961px;top:879px" width="24" height="18" viewBox="0 0 24 18"><path d="M2.500 3.500 L12 13.500 L21.500 3.500" stroke="#555" stroke-width="3.400" fill="none"/></svg>
<div class="bul" style="top:1031px"></div><div class="bul" style="top:1075px"></div><div class="bul" style="top:1120px"></div><div class="bul" style="top:1164px"></div><div class="bul" style="top:1208px"></div><div class="bul" style="top:1253px"></div><div class="bul" style="top:1297px"></div>

<!-- downloads bar -->
<div id="dlbar"></div>
<div class="dlsep" style="left:560px"></div><div class="dlsep" style="left:1026px"></div><div class="dlsep" style="left:1492px"></div><div class="dlsep" style="left:1958px"></div><div class="dlsep" style="left:2424px"></div>
<div class="fic" style="left:132px"></div><div class="fic dx" style="left:598px"></div><div class="fic" style="left:1064px"></div><div class="fic" style="left:1530px"></div><div class="fic" style="left:1996px"></div>
<svg class="car" style="left:504px"  width="20" height="14" viewBox="0 0 20 14"><path d="M2 11.500 L10 3.500 L18 11.500" stroke="#202124" stroke-width="2.800" fill="none"/></svg>
<svg class="car" style="left:970px"  width="20" height="14" viewBox="0 0 20 14"><path d="M2 11.500 L10 3.500 L18 11.500" stroke="#202124" stroke-width="2.800" fill="none"/></svg>
<svg class="car" style="left:1437px" width="20" height="14" viewBox="0 0 20 14"><path d="M2 11.500 L10 3.500 L18 11.500" stroke="#202124" stroke-width="2.800" fill="none"/></svg>
<svg class="car" style="left:1902px" width="20" height="14" viewBox="0 0 20 14"><path d="M2 11.500 L10 3.500 L18 11.500" stroke="#202124" stroke-width="2.800" fill="none"/></svg>
<svg class="car" style="left:2368px" width="20" height="14" viewBox="0 0 20 14"><path d="M2 11.500 L10 3.500 L18 11.500" stroke="#202124" stroke-width="2.800" fill="none"/></svg>
<div style="left:2562px;top:1370px;width:226px;height:64px;border:1.500px solid #55585d;border-radius:10px;background:#fff"></div>
<svg style="left:2815px;top:1393px" width="18" height="18" viewBox="0 0 20 20"><path d="M2 2 L18 18 M18 2 L2 18" stroke="#202124" stroke-width="3.200" stroke-linecap="round" fill="none"/></svg>
</div></div>
</file_text>

<div id="dock"></div>
<div id="dockin">
<!-- finder -->
<div class="di" style="left:125px;background:linear-gradient(90deg,#2aa4f4 0,#1e86ee 52%,#e9f0f8 52.5%,#dfe8f4 100%)">
<svg width="92" height="92" viewBox="0 0 92 92" style="position:absolute;left:0;top:0"><path d="M50 0 C40 22 38 38 40 52 H50 C50 66 52 80 56 92 H92 V0Z" fill="#e6eef8"/><path d="M50 0 C40 22 38 38 40 52 H50 C50 66 52 80 56 92" fill="none" stroke="#1b3a6b" stroke-width="2.200"/><path d="M20 62 C34 76 60 76 74 62" fill="none" stroke="#10203f" stroke-width="3.400" stroke-linecap="round"/><path d="M25 26 V36 M67 26 V36" stroke="#10203f" stroke-width="4" stroke-linecap="round"/></svg></div>
<!-- launchpad -->
<div class="di" style="left:247px;background:linear-gradient(180deg,#dcdce2,#c3c3cc)">
<svg width="92" height="92" viewBox="0 0 92 92" style="position:absolute;left:0;top:0"><g><rect x="15" y="15" width="18" height="18" rx="5" fill="#34c759"/><rect x="37" y="15" width="18" height="18" rx="5" fill="#ffb400"/><rect x="59" y="15" width="18" height="18" rx="5" fill="#ff8a1c"/><rect x="15" y="37" width="18" height="18" rx="5" fill="#e0241c"/><rect x="37" y="37" width="18" height="18" rx="5" fill="#9aa3ad"/><rect x="59" y="37" width="18" height="18" rx="5" fill="#ff3b66"/><rect x="15" y="59" width="18" height="18" rx="5" fill="#a04be0"/><rect x="37" y="59" width="18" height="18" rx="5" fill="#12a0f2"/><rect x="59" y="59" width="18" height="18" rx="5" fill="#1fd0a0"/></g></svg></div>
<!-- safari -->
<div class="di" style="left:367px;background:linear-gradient(180deg,#fdfdfd,#e9e9ee)">
<svg width="92" height="92" viewBox="0 0 92 92" style="position:absolute;left:0;top:0"><defs><linearGradient id="sf" x1="0" y1="0" x2="0" y2="1"><stop offset="0" stop-color="#1fc0f8"/><stop offset="1" stop-color="#1a6ae6"/></linearGradient></defs><circle cx="46" cy="46" r="39" fill="url(#sf)"/><circle cx="46" cy="46" r="35" fill="none" stroke="#fff" stroke-opacity=".75" stroke-width="6" stroke-dasharray="1.200 3.400"/><path d="M72 20 L50.500 50.500 L41.500 41.500Z" fill="#ff3b30"/><path d="M20 72 L41.500 41.500 L50.500 50.500Z" fill="#f4f4f4"/></svg></div>
<!-- calendar -->
<div class="di" style="left:489px;background:#fafafa;overflow:hidden"><div style="position:absolute;left:0;top:0;width:92px;height:28px;background:#f0463c"></div></div>
<!-- pages -->
<svg class="abs" style="left:606px;top:1656px" width="104" height="112" viewBox="0 0 104 112"><g transform="rotate(-9 50 55.800)"><rect x="12.500" y="9.300" width="75" height="93" fill="#fdfdfd" stroke="#cfcfcf" stroke-width=".8"/><path d="M12.500 9.300 H87.500 V24.500 H12.500Z" fill="#f79d2c"/><rect x="18.500" y="30.500" width="35" height="24" fill="#2f8fe6"/><path d="M36 34 C31 36 30 42 36 46 C42 42 41 36 36 34Z M36 46 V52" fill="#ff9a1c" stroke="#2e9b47" stroke-width="1.200"/><g stroke="#8c8c8c" stroke-width="1.500"><path d="M57 31 H82 M57 35.500 H82 M57 40 H82 M57 44.500 H82 M57 49 H82 M57 53.500 H76 M18.500 60 H82 M18.500 64.500 H82 M18.500 69 H82 M18.500 73.500 H70 M18.500 82 H82 M18.500 86.500 H82 M18.500 91 H82 M18.500 95.500 H62"/></g></g><g transform="translate(59.300 107.500) rotate(16.900)"><path d="M0 0 L-3.600 -14 H3.600Z" fill="#bfc3c8"/><path d="M0 0 L-1.500 -6 H1.500Z" fill="#2b2b2e"/><rect x="-4.600" y="-38" width="9.200" height="24" rx="1.500" fill="#2b2b30"/><rect x="-4.800" y="-107" width="9.600" height="69" rx="2" fill="#f08c12"/><rect x="-4.800" y="-107" width="3.400" height="69" rx="1.500" fill="#ffc663"/><rect x="-4.800" y="-42" width="9.600" height="3" fill="#ffd27a"/></g></svg>
<!-- numbers -->
<svg class="abs" style="left:730px;top:1664px" width="100" height="100" viewBox="0 0 100 100"><path d="M6 70 H94 L98 96 H2Z" fill="#f4f4f6"/><path d="M2 96 H98 V99 H2Z" fill="#c9c9ce"/><rect x="15" y="48" width="17" height="40" rx="2" fill="#ee3a4d"/><rect x="35" y="30" width="17" height="58" rx="2" fill="#f7941d"/><rect x="55" y="2" width="17" height="86" rx="2" fill="#28c445"/><rect x="75" y="18" width="17" height="70" rx="2" fill="#1d9bf0"/></svg>
<!-- keynote -->
<svg class="abs" style="left:852px;top:1660px" width="96" height="106" viewBox="0 0 96 106"><path d="M10 2 H86 L94 40 H2Z" fill="#1f8fe8"/><path d="M2 40 H94 V45 H2Z" fill="#1569c2"/><path d="M18 6 H78 L82 34 H14Z" fill="#eef3f8"/><circle cx="36" cy="21" r="9" fill="#34c759"/><path d="M36 21 L36 12 A9 9 0 0 1 44.500 24Z" fill="#ff9f0a"/><path d="M36 21 L44.500 24 A9 9 0 0 1 31 28.500Z" fill="#ff375f"/><rect x="45" y="45" width="6" height="50" fill="#b9c2cc"/><ellipse cx="48" cy="98" rx="22" ry="6.500" fill="#9fb1c2"/><ellipse cx="48" cy="96" rx="22" ry="6" fill="#c8d4df"/></svg>
<!-- app store -->
<div class="di" style="left:975px;background:linear-gradient(180deg,#1cb0f8,#1a6ff0)"><svg width="92" height="92" viewBox="0 0 92 92" style="position:absolute;left:0;top:0"><g stroke="#fff" stroke-width="7" stroke-linecap="round" fill="none"><path d="M31 67 L52.500 29"/><path d="M46 25 L50 32 L69.500 67"/><path d="M19 56 H49"/><path d="M63.500 56 H73"/></g></svg></div>
<!-- settings -->
<div class="di" style="left:1096px;background:linear-gradient(180deg,#d8d8dc,#8c8c92)"><svg width="92" height="92" viewBox="0 0 92 92" style="position:absolute;left:0;top:0"><circle cx="46" cy="46" r="37" fill="#55555a"/><circle cx="46" cy="46" r="34" fill="none" stroke="#c8c8cc" stroke-width="7" stroke-dasharray="4.500 3.200"/><circle cx="46" cy="46" r="27" fill="#8e8e94"/><circle cx="46" cy="46" r="21" fill="#c9c9ce"/><circle cx="46" cy="46" r="17" fill="#7c7c82"/><g stroke="#dedee2" stroke-width="4.500" stroke-linecap="round"><path d="M46 46 V28 M46 46 L30.500 55 M46 46 L61.500 55"/></g><circle cx="46" cy="46" r="5" fill="#e4e4e8"/></svg></div>
<div class="abs" style="left:1230px;top:1665px;width:2px;height:106px;background:rgba(255,255,255,.28)"></div>
<!-- chrome -->
<div class="di" style="left:1273px;background:#f4f4f6"><div style="position:absolute;left:9px;top:9px;width:74px;height:74px;border-radius:50%;background:conic-gradient(from -60deg,#ea4335 0 120deg,#fbbc05 120deg 240deg,#34a853 240deg 360deg)"></div><div style="position:absolute;left:27px;top:27px;width:38px;height:38px;border-radius:50%;background:#fff"></div><div style="position:absolute;left:31px;top:31px;width:30px;height:30px;border-radius:50%;background:#4285f4"></div></div>
<!-- terminal -->
<div class="di" style="left:1394px;background:#151517;border:4px solid #c9c9cd"></div>
<!-- music -->
<div class="di" style="left:1515px;background:linear-gradient(180deg,#fb5c74,#fa233b)"><svg width="92" height="92" viewBox="0 0 92 92" style="position:absolute;left:0;top:0"><path d="M36 24 L66 17 V58 a9 8 0 1 1 -6 -7.500 V30 L42 34 V64 a9 8 0 1 1 -6 -7.500Z" fill="#fff"/></svg></div>
<div class="abs" style="left:1650px;top:1665px;width:2px;height:106px;background:rgba(255,255,255,.28)"></div>
<!-- document -->
<div class="abs" style="left:1702px;top:1659px;width:72px;height:107px;background:#f6f6f6;box-shadow:0 1px 3px rgba(0,0,0,.5)"><div style="position:absolute;left:8px;top:30px;width:56px;height:40px;background:repeating-linear-gradient(180deg,#bdbdbd 0 1px,#f6f6f6 1px 5px)"></div><div style="position:absolute;left:8px;top:6px;width:50px;height:14px;background:#e2dccb"></div></div>
<!-- screenshot thumbnails -->
<div class="th" style="left:1805px"><i></i></div>
<div class="th dk" style="left:1927px"><i></i></div>
<div class="th" style="left:2049px"><i></i></div>
<div class="th" style="left:2170px"><i></i></div>
<div class="th dk" style="left:2291px"><i></i></div>
<div class="th dk" style="left:2413px"><i></i></div>
<div class="th dk" style="left:2535px;top:1681px;height:64px"><i></i></div>
<div class="pb" style="left:1876px"></div><div class="pb" style="left:1998px"></div><div class="pb" style="left:2120px"></div><div class="pb" style="left:2241px"></div><div class="pb" style="left:2362px"></div><div class="pb" style="left:2484px"></div><div class="pb" style="left:2606px"></div>
<!-- trash -->
<svg class="abs" style="left:2666px;top:1655px" width="88" height="110" viewBox="0 0 88 110"><defs><linearGradient id="tr" x1="0" y1="0" x2="1" y2="0"><stop offset="0" stop-color="#9a9da3"/><stop offset=".45" stop-color="#84878d"/><stop offset="1" stop-color="#a3a6ab"/></linearGradient></defs><path d="M3 18 H85 L77 100 Q76 107 69 107 H19 Q12 107 11 100Z" fill="url(#tr)" fill-opacity=".88"/><path d="M3 18 H85 L84 27 H4Z" fill="#b9bcc1" fill-opacity=".85"/><path d="M7 19 L11 8 L22 13 L27 3 L38 9 L45 1 L54 8 L64 2 L70 11 L80 8 L82 20 Q44 27 6 20Z" fill="#eeeef0"/><path d="M28 8 L39 6 L42 17 L29 18Z" fill="#3b8ad8"/><path d="M50 6 L62 9 L59 19 L48 17Z" fill="#d8503e"/><path d="M40 4 L49 3 L50 14 L41 15Z" fill="#58b368"/><path d="M16 12 L24 10 L26 19 L15 20Z" fill="#c9c9cd"/></svg>
<!-- running indicators -->
<div class="dot" style="left:167px"></div><div class="dot" style="left:652px"></div><div class="dot" style="left:1315px"></div><div class="dot" style="left:1436px"></div><div class="dot" style="left:1557px"></div>
</div>
</file_text>

<div id="texts">
<span class="t mb" style="left:114.5px;top:10.3px;font-size:27px;line-height:27px;color:#fff;font-weight:700;letter-spacing:-0.343px;">Chrome</span>
<span class="t mb" style="left:256.8px;top:10.3px;font-size:27px;line-height:27px;color:#fff;letter-spacing:-0.327px;">Файл</span>
<span class="t mb" style="left:365.4px;top:10.3px;font-size:27px;line-height:27px;color:#fff;letter-spacing:0.187px;">Изменить</span>
<span class="t mb" style="left:531.0px;top:10.3px;font-size:27px;line-height:27px;color:#fff;letter-spacing:0.262px;">Посмотреть</span>
<span class="t mb" style="left:724.5px;top:10.3px;font-size:27px;line-height:27px;color:#fff;letter-spacing:0.266px;">История</span>
<span class="t mb" style="left:872.5px;top:10.3px;font-size:27px;line-height:27px;color:#fff;letter-spacing:0.149px;">Закладки</span>
<span class="t mb" style="left:1032.4px;top:10.3px;font-size:27px;line-height:27px;color:#fff;letter-spacing:-0.495px;">Профили</span>
<span class="t mb" style="left:1189.3px;top:10.3px;font-size:27px;line-height:27px;color:#fff;letter-spacing:-0.229px;">Вкладка</span>
<span class="t mb" style="left:1334.7px;top:10.3px;font-size:27px;line-height:27px;color:#fff;letter-spacing:0.520px;">Окно</span>
<span class="t mb" style="left:1441.5px;top:10.3px;font-size:27px;line-height:27px;color:#fff;letter-spacing:-0.186px;">Справка</span>
<span class="t" style="left:2131.0px;top:11.0px;font-size:26px;line-height:26px;color:#2b2b2e;letter-spacing:0.658px;">A</span>
<span class="t mb" style="left:2614.4px;top:10.3px;font-size:27px;line-height:27px;color:#fff;letter-spacing:-0.031px;">Ср, 12 апр.</span>
<span class="t mb" style="left:2770.6px;top:10.3px;font-size:27px;line-height:27px;color:#fff;letter-spacing:0.658px;">20:28</span>
<span class="t" style="left:347.0px;top:88.0px;font-size:24.5px;line-height:24.5px;color:#202124;letter-spacing:1.048px;">Книги</span>
<span class="t" style="left:825.0px;top:88.0px;font-size:24.5px;line-height:24.5px;color:#202124;letter-spacing:0.413px;-webkit-mask-image:linear-gradient(90deg,#000 0,#000 90%,rgba(0,0,0,0) 99%);mask-image:linear-gradient(90deg,#000 0,#000 90%,rgba(0,0,0,0) 99%);">Modeling and Feedback Contro</span>
<span class="t" style="left:373.0px;top:155.9px;font-size:28.5px;line-height:28.5px;color:#202124;letter-spacing:0.760px;">link.springer.com</span>
<span class="t" style="left:599.5px;top:155.9px;font-size:28.5px;line-height:28.5px;color:#5f6368;letter-spacing:0.986px;">/chapter/10.1007/978-3-031-00978-5_16</span>
<span class="t" style="left:2404.5px;top:162.6px;font-size:14px;line-height:14px;color:#f1f1f1;font-weight:700;">G</span>
<span class="t u" style="left:472.2px;top:412.5px;font-size:33px;line-height:33px;color:#333;font-weight:700;letter-spacing:-0.384px;">Complex Systems: Spanning Control and Computational Cybernetics: Applications</span>
<span class="t" style="left:1756.8px;top:412.5px;font-size:33px;line-height:33px;color:#333;letter-spacing:-0.027px;">pp 389–412</span>
<span class="t u" style="left:1966.6px;top:412.5px;font-size:33px;line-height:33px;color:#333;letter-spacing:-0.718px;">Cite as</span>
<span class="t" style="left:286.0px;top:320.1px;font-size:5.2px;line-height:5.2px;color:#f6e2cf;transform:scaleX(0.9631);transform-origin:0 0;">Studies in Systems, Decision and Control  415</span>
<span class="t" style="left:285.7px;top:354.9px;font-size:9px;line-height:9px;color:#f6e2cf;transform:scaleX(0.7884);transform-origin:0 0;">Peng Shi</span>
<span class="t" style="left:285.7px;top:364.9px;font-size:9px;line-height:9px;color:#f6e2cf;transform:scaleX(0.8023);transform-origin:0 0;">Jovan Stefanovski</span>
<span class="t" style="left:285.7px;top:374.9px;font-size:9px;line-height:9px;color:#f6e2cf;transform:scaleX(0.7848);transform-origin:0 0;">Janusz Kacprzyk  Editors</span>
<span class="t" style="left:285.7px;top:395.4px;font-size:17px;line-height:17px;color:#f9ead8;transform:scaleX(0.8334);transform-origin:0 0;-webkit-text-stroke:.35px #f9ead8;">Complex Systems:</span>
<span class="t" style="left:285.7px;top:413.6px;font-size:17px;line-height:17px;color:#f9ead8;transform:scaleX(0.8609);transform-origin:0 0;-webkit-text-stroke:.35px #f9ead8;">Spanning Control</span>
<span class="t" style="left:285.7px;top:431.4px;font-size:17px;line-height:17px;color:#f9ead8;transform:scaleX(0.8836);transform-origin:0 0;-webkit-text-stroke:.35px #f9ead8;">and Computational</span>
<span class="t" style="left:285.7px;top:449.2px;font-size:17px;line-height:17px;color:#f9ead8;transform:scaleX(0.8393);transform-origin:0 0;-webkit-text-stroke:.35px #f9ead8;">Cybernetics:</span>
<span class="t" style="left:285.7px;top:467.1px;font-size:17px;line-height:17px;color:#f9ead8;transform:scaleX(0.8924);transform-origin:0 0;-webkit-text-stroke:.35px #f9ead8;">Applications</span>
<span class="t" style="left:285.7px;top:491.2px;font-size:8.5px;line-height:8.5px;color:#f6e2cf;transform:scaleX(0.8423);transform-origin:0 0;">Dedicated to Professor Georgi</span>
<span class="t" style="left:285.7px;top:501.1px;font-size:8.5px;line-height:8.5px;color:#f6e2cf;transform:scaleX(0.8721);transform-origin:0 0;">M. Dimirovski on his Anniversary</span>
<span class="t" style="left:389.5px;top:532.1px;font-size:8.5px;line-height:8.5px;color:#f6e2cf;font-family:'Liberation Serif',serif;transform:scaleX(1.0419);transform-origin:0 0;">Springer</span>
<span class="t u" style="left:226.8px;top:649.4px;font-size:32px;line-height:32px;color:#666;letter-spacing:-0.187px;">Home</span>
<span class="t u" style="left:365.7px;top:649.4px;font-size:32px;line-height:32px;color:#666;letter-spacing:0.259px;">Complex Systems: Spanning Control and Computational Cybernetics: Appli</span>
<span class="t" style="left:1450.0px;top:649.4px;font-size:32px;line-height:32px;color:#666;letter-spacing:-1.986px;">...</span>
<span class="t" style="left:1541.5px;top:649.4px;font-size:32px;line-height:32px;color:#222;letter-spacing:0.243px;">Chapter</span>
<span class="t h1" style="left:226.8px;top:723.2px;font-size:64px;line-height:64px;color:#333;font-family:'Liberation Serif',serif;letter-spacing:-0.490px;transform:scaleX(1.0350);transform-origin:0 0;">Modeling and Feedback Control for Development of</span>
<span class="t h1" style="left:226.8px;top:797.0px;font-size:64px;line-height:64px;color:#333;font-family:'Liberation Serif',serif;letter-spacing:-0.149px;transform:scaleX(1.0350);transform-origin:0 0;">Mobile Technologies in Virtual Education Environments</span>
<span class="t u" style="left:226.8px;top:910.4px;font-size:32px;line-height:32px;color:#004b83;letter-spacing:-0.151px;">Nurassyl Kerimbayev</span>
<span class="t" style="left:527.5px;top:910.4px;font-size:32px;line-height:32px;color:#333;">,</span>
<span class="t u" style="left:543.6px;top:910.4px;font-size:32px;line-height:32px;color:#004b83;letter-spacing:0.296px;">Vladimir Jotsov</span>
<span class="t" style="left:808.0px;top:910.4px;font-size:32px;line-height:32px;color:#333;">,</span>
<span class="t u" style="left:823.3px;top:910.4px;font-size:32px;line-height:32px;color:#004b83;letter-spacing:-0.049px;">Aliya Akramova</span>
<span class="t" style="left:1053.6px;top:910.4px;font-size:32px;line-height:32px;color:#333;letter-spacing:-0.944px;">&amp;</span>
<span class="t u" style="left:1083.3px;top:910.4px;font-size:32px;line-height:32px;color:#004b83;letter-spacing:0.367px;">Nurdaulet Nurym</span>
<span class="t" style="left:226.8px;top:987.9px;font-size:32px;line-height:32px;color:#666;letter-spacing:0.109px;">Chapter</span>
<span class="t u" style="left:376.4px;top:987.9px;font-size:32px;line-height:32px;color:#004b83;letter-spacing:0.158px;">First Online: 19 September 2022</span>
<span class="t" style="left:226.8px;top:1060.9px;font-size:32px;line-height:32px;color:#222;font-weight:700;transform:scaleX(0.9309);transform-origin:0 0;">121</span>
<span class="t" style="left:295.8px;top:1060.9px;font-size:32px;line-height:32px;color:#666;letter-spacing:-0.105px;">Accesses</span>
<span class="t" style="left:226.8px;top:1138.8px;font-size:32px;line-height:32px;color:#333;letter-spacing:0.256px;">Part of the</span>
<span class="t u" style="left:386.9px;top:1138.8px;font-size:32px;line-height:32px;color:#004b83;letter-spacing:0.158px;">Studies in Systems, Decision and Control</span>
<span class="t" style="left:989.5px;top:1138.8px;font-size:32px;line-height:32px;color:#333;letter-spacing:-0.128px;">book series (SSDC,volume 415)</span>
<span class="t h2" style="left:225.3px;top:1260.9px;font-size:51px;line-height:51px;color:#222;font-family:'Liberation Serif',serif;letter-spacing:0.200px;transform:scaleX(1.0300);transform-origin:0 0;">Abstract</span>
<span class="t" style="left:1994.0px;top:753.3px;font-size:32px;line-height:32px;color:#fff;letter-spacing:0.317px;">Access via your institution</span>
<span class="t" style="left:1997.8px;top:874.6px;font-size:28px;line-height:28px;color:#333;letter-spacing:-0.602px;">Chapter</span>
<span class="t" style="left:2549.7px;top:874.6px;font-size:28px;line-height:28px;color:#222;font-weight:700;transform:scaleX(0.8678);transform-origin:0 0;">EUR</span>
<span class="t" style="left:2622.6px;top:874.6px;font-size:28px;line-height:28px;color:#222;font-weight:700;letter-spacing:0.333px;">29.95</span>
<span class="t" style="left:2304.6px;top:917.1px;font-size:27px;line-height:27px;color:#666;letter-spacing:-0.052px;">Price includes VAT (Kazakhstan)</span>
<span class="t" style="left:2027.8px;top:1021.7px;font-size:27px;line-height:27px;color:#5c5c5c;letter-spacing:0.137px;">DOI: 10.1007/978-3-031-00978-5_16</span>
<span class="t" style="left:2027.8px;top:1066.4px;font-size:27px;line-height:27px;color:#5c5c5c;letter-spacing:0.142px;">Chapter length: 24 pages</span>
<span class="t" style="left:2027.8px;top:1110.4px;font-size:27px;line-height:27px;color:#5c5c5c;letter-spacing:-0.134px;">Instant PDF download</span>
<span class="t" style="left:2027.8px;top:1155.0px;font-size:27px;line-height:27px;color:#5c5c5c;letter-spacing:-0.181px;">Readable on all devices</span>
<span class="t" style="left:2027.8px;top:1199.1px;font-size:27px;line-height:27px;color:#5c5c5c;letter-spacing:0.081px;">Own it forever</span>
<span class="t" style="left:2027.8px;top:1243.1px;font-size:27px;line-height:27px;color:#5c5c5c;letter-spacing:0.137px;">Exclusive offer for individuals only</span>
<span class="t" style="left:2027.8px;top:1287.7px;font-size:27px;line-height:27px;color:#5c5c5c;letter-spacing:0.196px;">Tax calculation will be finalised during checkout</span>
<span class="t" style="left:186.2px;top:1391.6px;font-size:26.5px;line-height:26.5px;color:#202124;letter-spacing:1.193px;">003.jpg</span>
<span class="t" style="left:652.0px;top:1391.6px;font-size:26.5px;line-height:26.5px;color:#202124;letter-spacing:0.672px;">Инструкция по....docx</span>
<span class="t" style="left:1118.6px;top:1391.6px;font-size:26.5px;line-height:26.5px;color:#202124;letter-spacing:0.316px;">WhatsApp Imag....jpeg</span>
<span class="t" style="left:1584.6px;top:1391.6px;font-size:26.5px;line-height:26.5px;color:#202124;letter-spacing:0.572px;">КП ГФ Керимба....pdf</span>
<span class="t" style="left:2050.5px;top:1391.6px;font-size:26.5px;line-height:26.5px;color:#202124;letter-spacing:0.596px;">Паспорт Умирза....jpg</span>
<span class="t" style="left:2594.0px;top:1388.5px;font-size:26px;line-height:26px;color:#1a73e8;letter-spacing:0.025px;-webkit-text-stroke:.5px #1a73e8;">Показать все</span>
<span class="t" style="left:139.0px;top:1410.3px;font-size:4.6px;line-height:4.6px;color:#a9a9a9;font-weight:700;">JPEG</span>
<span class="t" style="left:605.0px;top:1410.3px;font-size:4.6px;line-height:4.6px;color:#a9a9a9;font-weight:700;">DOCX</span>
<span class="t" style="left:1071.0px;top:1410.3px;font-size:4.6px;line-height:4.6px;color:#a9a9a9;font-weight:700;">JPEG</span>
<span class="t" style="left:1538.5px;top:1410.3px;font-size:4.6px;line-height:4.6px;color:#a9a9a9;font-weight:700;">PDF</span>
<span class="t" style="left:2003.0px;top:1410.3px;font-size:4.6px;line-height:4.6px;color:#a9a9a9;font-weight:700;">JPEG</span>
<span class="t" style="left:513.0px;top:1674.3px;font-size:18px;line-height:18px;color:#fff;font-weight:700;letter-spacing:1.164px;">АПР.</span>
<span class="t" style="left:507.5px;top:1696.6px;font-size:56px;line-height:56px;color:#343436;letter-spacing:-9.089px;">12</span>
<span class="t" style="left:621.0px;top:1673.6px;font-size:10.5px;line-height:10.5px;color:#fff6e6;letter-spacing:-1.100px;transform:rotate(-9deg);transform-origin:0 100%;">PAGES</span>
<span class="t" style="left:874.0px;top:1666.4px;font-size:6px;line-height:6px;color:#2a4a6a;font-weight:700;letter-spacing:-0.167px;">KEYNOTE</span>
<span class="t" style="left:1411.0px;top:1678.4px;font-size:22px;line-height:22px;color:#f2f2f2;font-weight:700;letter-spacing:1.917px;">&gt;_</span>
</div>
</div>
</body></html>
